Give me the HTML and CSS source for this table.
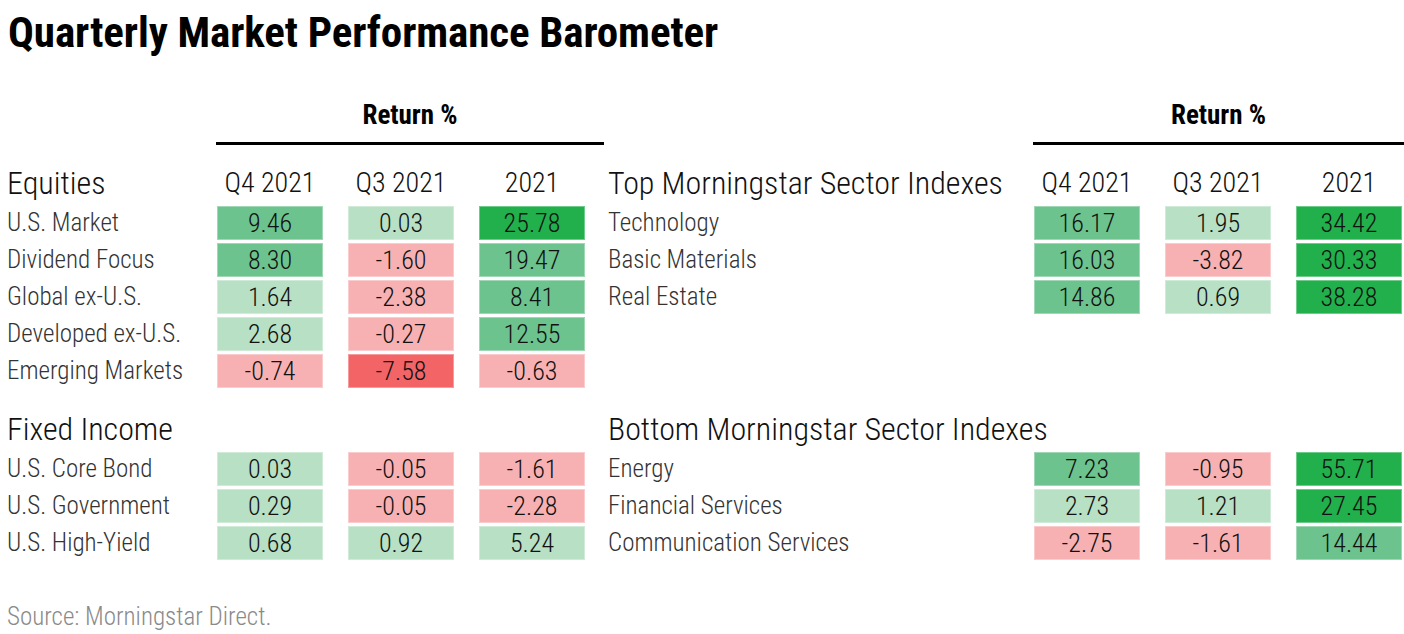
FILE: index.html
```html
<!DOCTYPE html>
<html>
<head>
<meta charset="utf-8">
<link rel="stylesheet" href="styles.css">
</head>
<body>
<div class="page">
  <h1 class="title">Quarterly Market Performance Barometer</h1>
  <div class="panels">
    <div class="panel panel-left">
      <div class="ret-head"><span>Return %</span></div>
      <div class="sec sec-top">
        <div class="sec-name">Equities</div>
        <div class="col-name">Q4 2021</div>
        <div class="col-name">Q3 2021</div>
        <div class="col-name">2021</div>

        <div class="lbl">U.S. Market</div>
        <div class="cell g2">9.46</div>
        <div class="cell g1">0.03</div>
        <div class="cell g3">25.78</div>

        <div class="lbl">Dividend Focus</div>
        <div class="cell g2">8.30</div>
        <div class="cell r1">-1.60</div>
        <div class="cell g2">19.47</div>

        <div class="lbl">Global ex-U.S.</div>
        <div class="cell g1">1.64</div>
        <div class="cell r1">-2.38</div>
        <div class="cell g2">8.41</div>

        <div class="lbl">Developed ex-U.S.</div>
        <div class="cell g1">2.68</div>
        <div class="cell r1">-0.27</div>
        <div class="cell g2">12.55</div>

        <div class="lbl">Emerging Markets</div>
        <div class="cell r1">-0.74</div>
        <div class="cell r2">-7.58</div>
        <div class="cell r1">-0.63</div>
      </div>
      <div class="sec sec-bottom">
        <div class="sec-name">Fixed Income</div>
        <div class="col-name"></div>
        <div class="col-name"></div>
        <div class="col-name"></div>

        <div class="lbl">U.S. Core Bond</div>
        <div class="cell g1">0.03</div>
        <div class="cell r1">-0.05</div>
        <div class="cell r1">-1.61</div>

        <div class="lbl">U.S. Government</div>
        <div class="cell g1">0.29</div>
        <div class="cell r1">-0.05</div>
        <div class="cell r1">-2.28</div>

        <div class="lbl">U.S. High-Yield</div>
        <div class="cell g1">0.68</div>
        <div class="cell g1">0.92</div>
        <div class="cell g1">5.24</div>
      </div>
    </div>

    <div class="panel panel-right">
      <div class="ret-head"><span>Return %</span></div>
      <div class="sec sec-top">
        <div class="sec-name">Top Morningstar Sector Indexes</div>
        <div class="col-name">Q4 2021</div>
        <div class="col-name">Q3 2021</div>
        <div class="col-name">2021</div>

        <div class="lbl">Technology</div>
        <div class="cell g2">16.17</div>
        <div class="cell g1">1.95</div>
        <div class="cell g3">34.42</div>

        <div class="lbl">Basic Materials</div>
        <div class="cell g2">16.03</div>
        <div class="cell r1">-3.82</div>
        <div class="cell g3">30.33</div>

        <div class="lbl">Real Estate</div>
        <div class="cell g2">14.86</div>
        <div class="cell g1">0.69</div>
        <div class="cell g3">38.28</div>
      </div>
      <div class="sec sec-bottom">
        <div class="sec-name">Bottom Morningstar Sector Indexes</div>
        <div class="col-name"></div>
        <div class="col-name"></div>
        <div class="col-name"></div>

        <div class="lbl">Energy</div>
        <div class="cell g2">7.23</div>
        <div class="cell r1">-0.95</div>
        <div class="cell g3">55.71</div>

        <div class="lbl">Financial Services</div>
        <div class="cell g1">2.73</div>
        <div class="cell g1">1.21</div>
        <div class="cell g3">27.45</div>

        <div class="lbl">Communication Services</div>
        <div class="cell r1">-2.75</div>
        <div class="cell r1">-1.61</div>
        <div class="cell g2">14.44</div>
      </div>
    </div>
  </div>
  <div class="source">Source: Morningstar Direct.</div>
</div>
</body>
</html>
```

FILE: styles.css
```css
* { box-sizing: border-box; }

html, body {
  margin: 0;
  padding: 0;
  background: #ffffff;
}

body {
  font-family: "Roboto Condensed", "DejaVu Sans Condensed", "Liberation Sans Narrow", "Roboto", sans-serif;
  font-stretch: condensed;
  color: #222222;
  width: 1404px;
  height: 634px;
  overflow: hidden;
}

.page {
  display: flex;
  flex-direction: column;
}

.title {
  margin: 8px 0 0 8px;
  font-size: 43px;
  line-height: 48px;
  font-weight: 700;
  color: #000000;
  letter-spacing: -0.1px;
}

.panels {
  display: flex;
}

.panel-left {
  width: 604px;
}

.panel-right {
  width: 800px;
}

.ret-head {
  height: 89px;
  border-bottom: 3px solid #000000;
  display: flex;
  align-items: center;
  justify-content: center;
  padding-top: 32px;
  font-size: 27px;
  font-weight: 700;
  color: #000000;
}

.panel-left .ret-head {
  margin-left: 216px;
}

.panel-right .ret-head {
  margin-left: 429px;
}

.sec {
  display: grid;
  column-gap: 25px;
  row-gap: 3px;
}

.panel-left .sec {
  grid-template-columns: 192px 106px 106px 106px;
}

.panel-right .sec {
  grid-template-columns: 405px 106px 106px 106px;
}

.sec-top {
  margin-top: 22px;
  grid-template-rows: 36px repeat(5, 34px);
}

.sec-bottom {
  margin-top: 25px;
  grid-template-rows: 36px repeat(3, 34px);
}

.sec-name {
  font-size: 32px;
  font-weight: 300;
  color: #111111;
  line-height: 32px;
  white-space: nowrap;
}

.panel-left .sec-name,
.panel-left .lbl {
  padding-left: 7px;
}

.panel-right .sec-name,
.panel-right .lbl {
  padding-left: 4px;
}

.col-name {
  font-size: 28px;
  font-weight: 300;
  color: #111111;
  text-align: center;
  line-height: 32px;
  white-space: nowrap;
}

.lbl {
  font-size: 25px;
  font-weight: 300;
  color: #333333;
  line-height: 34px;
  white-space: nowrap;
}

.cell {
  font-size: 26px;
  font-weight: 300;
  color: #111111;
  text-align: center;
  line-height: 34px;
  box-shadow: inset 0 0 0 1px rgba(255, 255, 255, 0.35);
}

.g1 { background: #b7e0c4; }
.g2 { background: #6dc38e; }
.g3 { background: #21b04c; }
.r1 { background: #f8b1b3; }
.r2 { background: #f26466; }

.source {
  margin-top: 42px;
  padding-left: 7px;
  font-size: 25px;
  font-weight: 300;
  color: #8a8a8a;
}
```
